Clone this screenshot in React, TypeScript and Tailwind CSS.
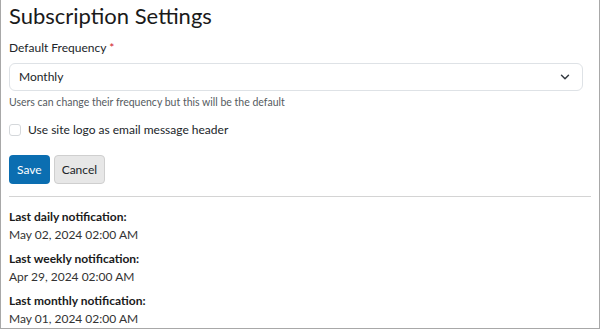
import { ChevronDown } from "lucide-react";

const notifications = [
  { label: "Last daily notification:", value: "May 02, 2024 02:00 AM" },
  { label: "Last weekly notification:", value: "Apr 29, 2024 02:00 AM" },
  { label: "Last monthly notification:", value: "May 01, 2024 02:00 AM" },
];

export default function App() {
  return (
    <div className="h-[329px] w-[600px] overflow-hidden border-x border-b border-[#a8a8a8] bg-white font-['Lato',sans-serif] text-[#212529]">
      <div className="px-2">
        <h1 className="pt-[1px] text-[22px] leading-[30px] text-[#1a1a1a]">
          Subscription Settings
        </h1>

        <label className="mt-[8px] block text-[12px] leading-[18px]">
          Default Frequency <span className="text-[#d0202b]">*</span>
        </label>
        <div className="mt-[6px] mr-[8px] flex h-[28px] items-center justify-between rounded-[6px] border border-[#dee2e6] pl-[9px] pr-[10px] text-[12px]">
          <span>Monthly</span>
          <ChevronDown className="h-[14px] w-[14px] text-[#343a40]" strokeWidth={2.5} />
        </div>
        <p className="mt-[3px] text-[10.5px] leading-[16px] text-[#555b61]">
          Users can change their frequency but this will be the default
        </p>

        <label className="mt-[11px] flex items-center gap-[7px] text-[12px] leading-[18px]">
          <span className="h-[12px] w-[12px] rounded-[3px] border border-[#d5d8db] bg-white" />
          Use site logo as email message header
        </label>

        <div className="mt-[16px] flex gap-[4px]">
          <button className="h-[29px] rounded-[4px] bg-[#0b6eb1] px-[8px] text-[12px] text-white">
            Save
          </button>
          <button className="h-[29px] rounded-[4px] border border-[#cfcfcf] bg-[#e7e7e7] px-[7px] text-[12px] text-[#212529]">
            Cancel
          </button>
        </div>

        <hr className="mt-[12px] border-t border-[#d4d4d4]" />

        <div className="mt-[11px] flex flex-col gap-[6px] text-[12px] leading-[18px]">
          {notifications.map((n) => (
            <div key={n.label}>
              <div className="font-bold text-[#1a1a1a]">{n.label}</div>
              <div className="text-[#333]">{n.value}</div>
            </div>
          ))}
        </div>
      </div>
    </div>
  );
}
